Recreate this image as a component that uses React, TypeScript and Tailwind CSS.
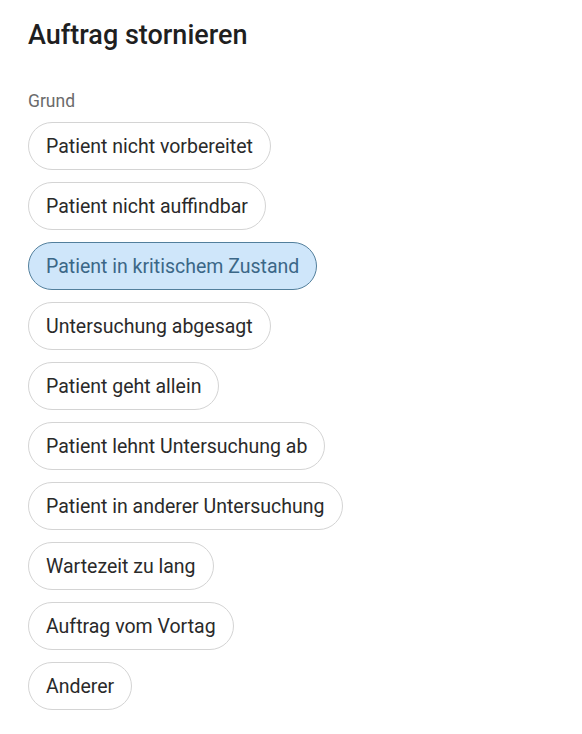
import React, { useState } from "react";

const reasons = [
  "Patient nicht vorbereitet",
  "Patient nicht auffindbar",
  "Patient in kritischem Zustand",
  "Untersuchung abgesagt",
  "Patient geht allein",
  "Patient lehnt Untersuchung ab",
  "Patient in anderer Untersuchung",
  "Wartezeit zu lang",
  "Auftrag vom Vortag",
  "Anderer",
];

export default function App() {
  const [selected, setSelected] = useState("Patient in kritischem Zustand");

  return (
    <div
      className="min-h-screen w-full bg-white px-7 pt-[19px]"
      style={{ fontFamily: "Roboto, 'Noto Sans', sans-serif" }}
    >
      <h1 className="text-[27px] leading-8 font-medium text-[#1f1f1f]">Auftrag stornieren</h1>

      <p className="mt-[38px] text-[17.5px] leading-6 text-[#6b6b6b]">Grund</p>

      <div className="mt-[9px] flex flex-col items-start gap-3">
        {reasons.map((r) => {
          const active = r === selected;
          return (
            <button
              key={r}
              onClick={() => setSelected(r)}
              className={
                active
                  ? "h-12 rounded-full border border-[#527f9c] bg-[#cfe6fa] px-[17px] text-[19.5px] leading-[23px] text-[#3b6787]"
                  : "h-12 rounded-full border border-[#d4d4d4] bg-white px-[17px] text-[19.5px] leading-[23px] text-[#2a2a2a]"
              }
            >
              {r}
            </button>
          );
        })}
      </div>
    </div>
  );
}
